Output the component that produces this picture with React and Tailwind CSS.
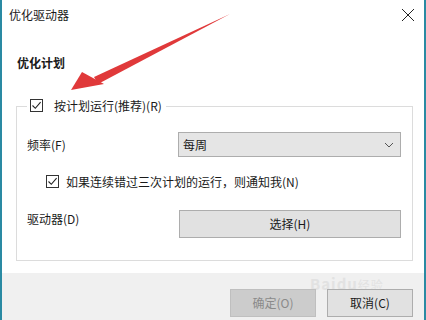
import React from "react";

const font = { fontFamily: '"Noto Sans CJK SC", "Microsoft YaHei", sans-serif' };

function Check({ className = "" }) {
  return (
    <span className={`flex h-[13px] w-[13px] items-center justify-center border border-[#333] bg-white ${className}`}>
      <svg width="11" height="11" viewBox="0 0 11 11">
        <path d="M1.5 5.5 L4.3 8.3 L9.6 2.2" fill="none" stroke="#222" strokeWidth="1.1" />
      </svg>
    </span>
  );
}

export default function App() {
  return (
    <div
      className="relative flex h-[320px] w-[426px] flex-col overflow-hidden border-x-2 border-x-[#2a8aa3] bg-white text-[12px] text-[#1a1a1a]"
      style={font}
    >
      {/* title bar */}
      <div className="flex h-[30px] items-center justify-between pl-[7px] pr-[9px]">
        <span className="text-[12px] leading-none">优化驱动器</span>
        <svg width="14" height="14" viewBox="0 0 14 14">
          <path d="M1 1 L13 13 M13 1 L1 13" stroke="#222" strokeWidth="1" />
        </svg>
      </div>

      <div className="flex-1 pl-[14px] pr-[11px]">
        <div className="mt-[27px] pl-[1px] text-[12px] font-bold leading-none">优化计划</div>

        {/* group box */}
        <div className="relative mt-[37px] h-[155px] border border-[#dcdcdc]">
          <div className="absolute left-[10px] top-[-8px] flex items-center gap-[11px] bg-white pl-[3px] pr-[4px]">
            <Check />
            <span className="leading-none">按计划运行(推荐)(R)</span>
          </div>

          <div className="flex flex-col pl-[10px] pr-[11px] pt-[25px]">
            <div className="flex items-center justify-between">
              <span className="leading-none">频率(F)</span>
              <div className="flex h-[25px] w-[223px] items-center justify-between border border-[#adadad] bg-[#e5e5e5] pl-[4px] pr-[6px]">
                <span className="leading-none">每周</span>
                <svg width="10" height="6" viewBox="0 0 10 6">
                  <path d="M1 1 L5 5 L9 1" fill="none" stroke="#555" strokeWidth="1" />
                </svg>
              </div>
            </div>

            <div className="mt-[18px] flex items-center gap-[7px] pl-[19px]">
              <Check />
              <span className="leading-none">如果连续错过三次计划的运行，则通知我(N)</span>
            </div>

            <div className="mt-[22px] flex items-start justify-between">
              <span className="mt-[3px] leading-none">驱动器(D)</span>
              <div className="flex h-[28px] w-[222px] items-center justify-center border border-[#adadad] bg-[#e1e1e1]">
                <span className="leading-none">选择(H)</span>
              </div>
            </div>
          </div>
        </div>
      </div>

      {/* footer */}
      <div className="relative flex h-[47px] items-start justify-end gap-[11px] bg-[#f0f0f0] pr-[11px] pt-[16px]">
        <span className="absolute left-[308px] top-[3px] text-[15px] font-bold leading-none tracking-[1px] text-[#e2e2e2]">
          Baidu<span className="text-[12px] font-normal">经验</span>
        </span>
        <div className="relative flex h-[28px] w-[86px] items-center justify-center border border-[#bfbfbf] bg-[#cccccc] text-[#8a8a8a]">
          确定(O)
        </div>
        <div className="relative flex h-[28px] w-[86px] items-center justify-center border border-[#adadad] bg-[#e1e1e1]">
          取消(C)
        </div>
      </div>

      {/* red annotation arrow */}
      <svg className="pointer-events-none absolute left-0 top-0" width="426" height="320" viewBox="0 0 426 320">
        <path d="M228 14 L96 84 L92 77 Z" fill="#e0393a" />
        <path d="M69 90 L80 72 L102 84 Z" fill="#e0393a" />
      </svg>
    </div>
  );
}
